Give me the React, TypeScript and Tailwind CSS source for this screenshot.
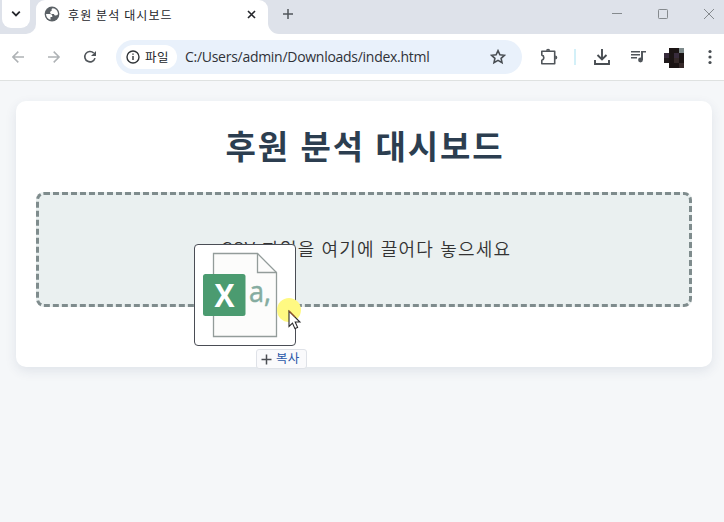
const korean = "font-['Noto_Sans_CJK_KR',sans-serif]";

function TabStrip() {
  return (
    <div className="flex h-[34px] items-start bg-[#dee2ea]">
      <div className="flex h-[34px] w-9 shrink-0 bg-white">
        <div className="h-[34px] w-9 rounded-br-[10px] bg-[#dee2ea]">
          <div className="ml-0.5 flex h-7 w-7 items-center justify-center rounded-b-[9px] bg-white">
            <svg width="10" height="8" viewBox="0 0 10 8" fill="none" stroke="#24262b" strokeWidth="1.8">
              <path d="M1.2 1.7 5 5.4l3.8-3.7" />
            </svg>
          </div>
        </div>
      </div>
      <div className="flex h-[34px] w-[232px] shrink-0 bg-[#dee2ea]">
        <div className="flex h-[34px] w-full items-start rounded-t-[9px] bg-white">
          <svg className="mt-[6px] ml-2 shrink-0" width="16" height="16" viewBox="0 0 16 16">
            <circle cx="8" cy="8" r="7.4" fill="#5b6166" />
            <path d="M2 8h4.1c1.3 0 2.2.8 2.2 2.1v.8H6.500v2.900C3.900 13.200 2 10.800 2 8zM8.800 2.300c3 .3 5.200 2.700 5.200 5.700-.5 1.200-1.300 1.400-2.500 1.400-.9 0-1.500-.6-1.500-1.500H7.600c-.9 0-1.500-.6-1.500-1.400 0-.9.6-1.500 1.500-1.500V3.700c0-.8.5-1.300 1.200-1.400z" fill="white" />
          </svg>
          <span className={`${korean} mt-[6px] ml-2 w-[170px] text-[12px] leading-[18px] tracking-[1.1px] whitespace-nowrap text-[#24262b]`}>
            후원 분석 대시보드
          </span>
          <svg className="mt-[10px] ml-[9px] shrink-0" width="9" height="9" viewBox="0 0 9 9" stroke="#24262b" strokeWidth="1.6">
            <path d="m1 1 7 7M8 1 1 8" />
          </svg>
        </div>
      </div>
      <div className="h-[34px] flex-1 bg-white">
        <div className="flex h-[34px] justify-between rounded-bl-[11px] bg-[#dee2ea]">
          <svg className="mt-2 ml-[14px]" width="12" height="12" viewBox="0 0 12 12" stroke="#50565b" strokeWidth="1.5">
            <path d="M1 6h10M6 1v10" />
          </svg>
          <svg className="mt-2 mr-[9px]" width="104" height="12" viewBox="0 0 104 12" fill="none" stroke="#858a8e" strokeWidth="1">
            <path d="M1 5.5h10M93 1l10 10M103 1 93 11" />
            <rect x="47.5" y="1.5" width="9" height="9" rx="0.8" />
          </svg>
        </div>
      </div>
    </div>
  );
}

function Toolbar() {
  return (
    <div className="flex h-[47px] items-center border-b border-[#dfe2e1] bg-white">
      <svg className="ml-3 shrink-0" width="86" height="16" viewBox="0 0 86 16" fill="none" strokeWidth="1.5">
        <path d="M12 8H1M6.3 2.6.9 8l5.4 5.4M36 8h11M41.7 2.6 47.1 8l-5.4 5.4" stroke="#aeb2b5" />
        <path d="M81.7 4A5.2 5.2 0 1 0 83 9.1" stroke="#50555a" strokeWidth="1.6" />
        <path d="M84 2v5h-5l1.8-1.8z" fill="#50555a" />
      </svg>
      <div className="ml-[18px] flex h-[34px] w-[406px] shrink-0 items-center rounded-full bg-[#e9f1fb]">
        <div className="ml-[5px] flex h-6 w-14 shrink-0 items-center rounded-full bg-white pl-[5px]">
          <svg width="14" height="14" viewBox="0 0 14 14" fill="none" stroke="#303438" strokeWidth="1.4">
            <circle cx="7" cy="7" r="6" />
            <path d="M7 6v4M7 3.5v1.3" />
          </svg>
          <span className={`${korean} ml-[5px] text-[12.5px] leading-6 tracking-[0.4px] whitespace-nowrap text-[#24262b]`}>파일</span>
        </div>
        <span className="ml-2 w-[250px] font-['Open_Sans','Noto_Sans',sans-serif] text-[14px] leading-6 tracking-[-0.28px] whitespace-nowrap text-[#303238]">
          C:/Users/admin/Downloads/index.html
        </span>
        <svg className="ml-[55px] shrink-0" width="16" height="16" viewBox="0 0 16 16" fill="none" stroke="#484d52" strokeWidth="1.6">
          <path d="m8 1.7 1.9 4.1 4.5.5-3.3 3 .9 4.4L8 11.4l-4 2.3.9-4.4-3.3-3 4.5-.5z" />
        </svg>
      </div>
      <svg className="ml-[18px] shrink-0" width="18" height="20" viewBox="0 0 18 20" fill="none" stroke="#50555a" strokeWidth="1.6">
        <path d="M1.8 4.300h12.900v12.400H1.800v-3.500c1.400-.3 2-1.200 2-2.600s-.6-2.200-2-2.500z" strokeLinejoin="round" />
        <path d="M6 3.800a2.100 2.100 0 0 1 4.200 0zM15.200 8.400a2.100 2.100 0 0 1 0 4.200z" fill="#50555a" stroke="none" />
      </svg>
      <div className="ml-4 h-4 w-0.5 shrink-0 bg-[#d3f0f8]" />
      <svg className="ml-[18px] shrink-0" width="16" height="18" viewBox="0 0 16 18" fill="none" stroke="#484d52" strokeWidth="1.9">
        <path d="M8 1v10M3.5 7 8 11.5 12.5 7M1 12v4h14v-4" />
      </svg>
      <svg className="ml-[21px] shrink-0" width="16" height="16" viewBox="0 0 16 16" fill="none" stroke="#50555a" strokeWidth="1.5">
        <path d="M0 2.7h9M0 5.7h9M0 8.7h6M11 11V2.7h4" />
        <circle cx="9.5" cy="11" r="2.4" fill="#50555a" stroke="none" />
        <path d="M11 11V2" strokeWidth="1.8" />
      </svg>
      <svg className="mt-0.5 ml-[17px] shrink-0" width="20" height="20" viewBox="0 0 20 20" shapeRendering="crispEdges">
        <path d="M5 0h10v5h5v15H5v-5H0V5h5z" fill="#1b1414" />
        <path d="M15 0h5v5h-5z" fill="#7d898a" />
        <path d="M0 5h5v5H0zM10 5h5v5h-5z" fill="#382c3c" />
        <path d="M10 10h5v5h-5zM15 15h5v5h-5z" fill="#352929" />
        <path d="M0 10h5v5H0z" fill="#211b1d" />
      </svg>
      <svg className="ml-6 shrink-0" width="4" height="16" viewBox="0 0 4 16" fill="#484d52">
        <circle cx="2" cy="2.5" r="1.6" />
        <circle cx="2" cy="8" r="1.6" />
        <circle cx="2" cy="13.5" r="1.6" />
      </svg>
    </div>
  );
}

function DraggedFile() {
  return (
    <div className="absolute top-[244px] left-[194px] h-[102px] w-[102px] rounded-[4px] border border-[#4a4d55] bg-white">
      <svg width="100" height="100" viewBox="0 0 100 100">
        <path d="M18.5 8.5h44L81.5 27.5v64h-63z" fill="#fcfcfb" stroke="#939c9a" strokeWidth="1.3" />
        <path d="M62.5 8.5v19h19" fill="none" stroke="#939c9a" strokeWidth="1.3" />
        <rect x="8" y="29" width="42.5" height="42" rx="2.5" fill="#4b9b70" />
        <text x="29.5" y="61.5" textAnchor="middle" className="fill-white font-['Open_Sans',sans-serif] text-[32px] font-bold" textLength="20" lengthAdjust="spacingAndGlyphs">X</text>
        <text x="54" y="57" className="fill-[#85aca0] stroke-[#85aca0] stroke-[0.5px] font-['Open_Sans',sans-serif] text-[30px]" textLength="22" lengthAdjust="spacingAndGlyphs">a,</text>
      </svg>
    </div>
  );
}

export default function App() {
  return (
    <div className="relative h-[522px] w-[724px] overflow-hidden bg-[#f5f7f9]">
      <TabStrip />
      <Toolbar />
      <main className="pt-5 pr-3 pl-4">
        <section className="h-[266px] rounded-[10px] bg-white px-5 pt-[25px] shadow-[0_4px_12px_rgba(44,62,100,0.10)]">
          <h1 className={`${korean} -mt-0.5 h-[68px] pl-0.5 text-center text-[33px] leading-[42px] font-bold tracking-[1.9px] text-[#2c3e50] [word-spacing:1px]`}>
            후원 분석 대시보드
          </h1>
          <div className="flex h-[115px] justify-center rounded-lg border-3 border-dashed border-[#7f8c8d] bg-[#eaf0f0] pt-[39px]">
            <p className={`${korean} pl-1 text-[18px] leading-7 font-[350] tracking-[1.2px] whitespace-nowrap text-[#333] [word-spacing:0.8px]`}>
              CSV 파일을 여기에 끌어다 놓으세요
            </p>
          </div>
        </section>
      </main>
      <DraggedFile />
      <div className="absolute top-[349px] left-[256px] flex h-5 w-[51px] items-center rounded-[3px] border border-[#dfe2e8] bg-[#fafafc] pl-1">
        <svg width="11" height="11" viewBox="0 0 11 11" stroke="#4b4e53" strokeWidth="1.5">
          <path d="M.5 5.5h10M5.5.5v10" />
        </svg>
        <span className={`${korean} ml-1 -mt-0.5 text-[12.5px] leading-4 tracking-[0.3px] whitespace-nowrap text-[#2b58a8]`}>복사</span>
      </div>
      <svg className="absolute top-[297px] left-[276px]" width="26" height="34" viewBox="0 0 26 34">
        <circle cx="13" cy="13" r="12" fill="#fff982" />
        <path d="M13 14v15.5l3.5-3.4 2.4 5.5 2.7-1.2-2.4-5.4h4.7z" fill="white" stroke="#29282a" strokeWidth="1.1" />
        <path d="m13 14 6 5.8" stroke="#96502a" strokeWidth="1.1" />
      </svg>
    </div>
  );
}
